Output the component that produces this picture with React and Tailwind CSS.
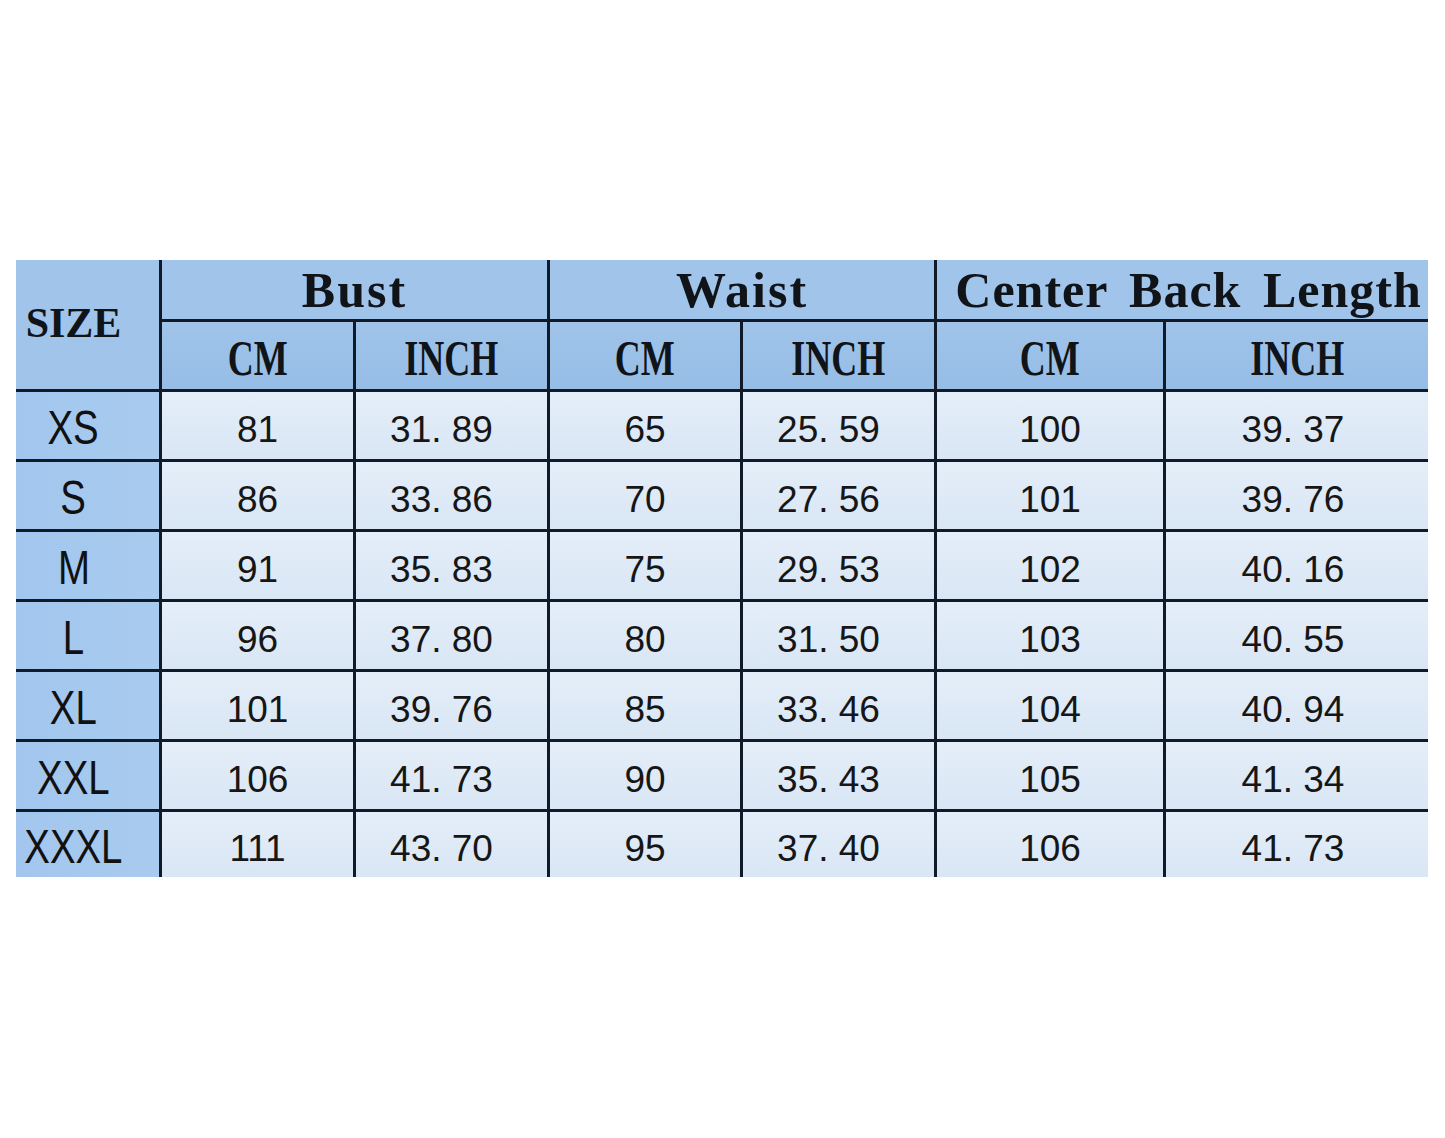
import React from 'react';

const rows = [
  ['XS', '81', '31. 89', '65', '25. 59', '100', '39. 37'],
  ['S', '86', '33. 86', '70', '27. 56', '101', '39. 76'],
  ['M', '91', '35. 83', '75', '29. 53', '102', '40. 16'],
  ['L', '96', '37. 80', '80', '31. 50', '103', '40. 55'],
  ['XL', '101', '39. 76', '85', '33. 46', '104', '40. 94'],
  ['XXL', '106', '41. 73', '90', '35. 43', '105', '41. 34'],
  ['XXXL', '111', '43. 70', '95', '37. 40', '106', '41. 73'],
];

const serif = { fontFamily: '"Liberation Serif", "Times New Roman", serif' };
const sans = { fontFamily: '"Liberation Sans", Arial, sans-serif' };

// padding per data column so the numbers sit where the picture has them
const pads = ['', 'pr-5', '', 'pr-5', '', 'pr-2'];

function Title({ children, extra = '', track = 'tracking-[2px]' }) {
  return (
    <div className={'bg-[#a0c4ea] col-span-2 flex items-center justify-center ' + extra}>
      <span style={serif} className={'text-[50px] font-bold leading-none [word-spacing:8px] text-[#101418] whitespace-pre ' + track}>{children}</span>
    </div>
  );
}

function Unit({ children }) {
  return (
    <div className="bg-gradient-to-b from-[#a0c4ea] to-[#96bde6] flex items-center justify-center pt-1">
      <span style={serif} className="inline-block text-[50px] font-bold leading-none text-[#101418] scale-x-[0.72]">{children}</span>
    </div>
  );
}

export default function App() {
  return (
    <div className="min-h-screen bg-white pt-[260px] pl-[16px]">
      <div className="grid w-[1412px] bg-[#111a28] gap-[3px] grid-cols-[143px_191px_191px_190px_191px_226px_262px] grid-rows-[59px_67px_67px_67px_67px_67px_67px_67px_65px]">
        <div className="row-span-2 bg-[#a0c4ea] flex items-center justify-center pr-7 pb-1">
          <span style={serif} className="text-[42px] font-bold leading-none text-[#101418]">SIZE</span>
        </div>
        <Title>Bust</Title>
        <Title>Waist</Title>
        <Title extra="pl-3" track="tracking-[1px]">Center Back Length</Title>
        <Unit>CM</Unit>
        <Unit>INCH</Unit>
        <Unit>CM</Unit>
        <Unit>INCH</Unit>
        <Unit>CM</Unit>
        <Unit>INCH</Unit>
        {rows.map(r => (
          <React.Fragment key={r[0]}>
            <div className="bg-gradient-to-r from-[#a2c6ee] to-[#a9cbee] flex items-center justify-center pr-7 pt-1">
              <span style={sans} className="inline-block text-[48px] leading-none text-[#111] scale-x-[0.8]">{r[0]}</span>
            </div>
            {r.slice(1).map((v, i) => (
              <div key={i} className={'bg-gradient-to-b from-[#e4eef9] to-[#d9e6f4] flex items-center justify-center pt-2 ' + pads[i]}>
                <span style={sans} className="text-[37px] leading-none text-[#161616] whitespace-pre">{v}</span>
              </div>
            ))}
          </React.Fragment>
        ))}
      </div>
    </div>
  );
}
